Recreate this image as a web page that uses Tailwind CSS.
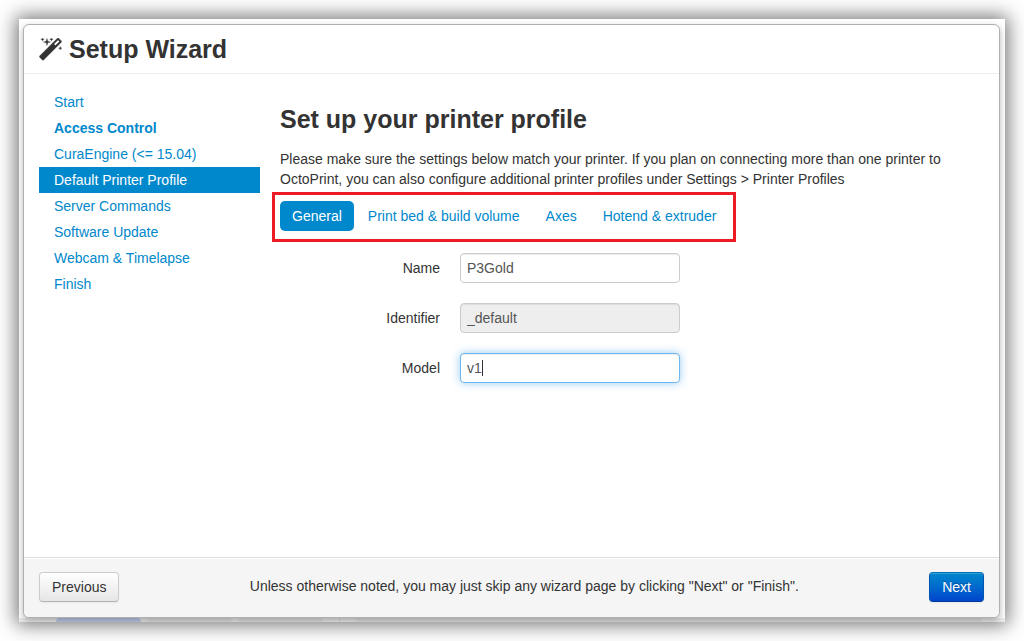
<!DOCTYPE html>
<html lang="en">
<head>
<meta charset="utf-8">
<title>Setup Wizard</title>
<script src="https://cdn.jsdelivr.net/npm/@tailwindcss/browser@4"></script>
</head>
<body class="flex min-h-screen bg-white p-[19px] font-['Liberation_Sans',Arial,sans-serif] text-sm leading-5 text-[#333]">
<div class="relative flex grow overflow-hidden bg-white pt-[5px] pr-[5px] pb-1 pl-1 shadow-[0_0_18px_3px_rgba(0,0,0,0.55)]">
  <!-- Page behind the dialog -->
  <div class="absolute inset-x-0 bottom-0 flex h-1 gap-[6px] bg-[#ececec] pl-[37px]" aria-hidden="true">
    <div class="w-[85px] rounded-t bg-[#bccaea]"></div>
    <div class="w-[85px] rounded-t bg-[#e2e2e2]"></div>
    <div class="w-[85px] rounded-t bg-[#e2e2e2]"></div>
    <div class="ml-[10px] w-px bg-[#dadada]"></div>
    <div class="mr-6 ml-[9px] grow rounded-bl bg-[#e2e2e2]"></div>
  </div>

  <main class="relative flex grow flex-col rounded-md border border-[#b0b0b0] bg-white shadow-[0_3px_7px_rgba(0,0,0,0.3)]">
    <header class="flex items-center gap-[7px] border-b border-[#eee] px-[15px] py-[9px]">
      <svg class="size-[23px]" viewBox="0 32 1664 1664" fill="#333" stroke="#333" stroke-width="24" aria-hidden="true"><path transform="translate(0 1536) scale(1 -1)" d="M1190 955l293 293l-107 107l-293 -293zM1637 1248q0 -27 -18 -45l-1286 -1286q-18 -18 -45 -18t-45 18l-198 198q-18 18 -18 45t18 45l1286 1286q18 18 45 18t45 -18l198 -198q18 -18 18 -45zM286 1438l98 -30l-98 -30l-30 -98l-30 98l-98 30l98 30l30 98zM636 1276l196 -60l-196 -60l-60 -196l-60 196l-196 60l196 60l60 196zM1566 798l98 -30l-98 -30l-30 -98l-30 98l-98 30l98 30l30 98zM926 1438l98 -30l-98 -30l-30 -98l-30 98l-98 30l98 30l30 98z"/></svg>
      <h1 class="text-[25px] leading-[30px] font-bold">Setup Wizard</h1>
    </header>

    <div class="flex grow gap-5 p-[15px]">
      <nav class="w-[221px] shrink-0 text-[#08c]" aria-label="Wizard pages">
        <ul>
          <li><a href="#" class="block px-[15px] py-[3px]">Start</a></li>
          <li><a href="#" class="block px-[15px] py-[3px] font-bold">Access Control</a></li>
          <li><a href="#" class="block px-[15px] py-[3px]">CuraEngine (&lt;= 15.04)</a></li>
          <li><a href="#" aria-current="page" class="block bg-[#08c] px-[15px] py-[3px] text-white">Default Printer Profile</a></li>
          <li><a href="#" class="block px-[15px] py-[3px]">Server Commands</a></li>
          <li><a href="#" class="block px-[15px] py-[3px]">Software Update</a></li>
          <li><a href="#" class="block px-[15px] py-[3px]">Webcam &amp; Timelapse</a></li>
          <li><a href="#" class="block px-[15px] py-[3px]">Finish</a></li>
        </ul>
      </nav>

      <section class="min-w-0 grow pt-[10px]">
        <h2 class="text-[25px] leading-10 font-bold">Set up your printer profile</h2>
        <p class="mt-[10px]">Please make sure the settings below match your printer. If you plan on connecting more than one printer to OctoPrint, you can also configure additional printer profiles under Settings &gt; Printer Profiles</p>

        <div class="relative mt-3 w-fit">
          <ul class="flex gap-[2px] text-[#08c]">
            <li><a href="#" aria-current="true" class="block rounded-[5px] bg-[#08c] px-3 py-[5px] text-white">General</a></li>
            <li><a href="#" class="block px-3 py-[5px]">Print bed &amp; build volume</a></li>
            <li><a href="#" class="block px-3 py-[5px]">Axes</a></li>
            <li><a href="#" class="block px-3 py-[5px]">Hotend &amp; extruder</a></li>
          </ul>
          <!-- Red callout around the tabs -->
          <div class="pointer-events-none absolute -top-[9px] -right-2 -bottom-[11px] -left-2 border-3 border-[#ed1c24]"></div>
        </div>

        <form class="mt-[22px] grid gap-5">
          <div class="flex gap-5">
            <label for="name" class="w-40 py-[5px] text-right">Name</label>
            <input id="name" type="text" value="P3Gold" class="h-[30px] w-[220px] rounded border border-[#ccc] bg-white px-[6px] text-[#555] shadow-[inset_0_1px_1px_rgba(0,0,0,0.075)]">
          </div>
          <div class="flex gap-5">
            <label for="identifier" class="w-40 py-[5px] text-right">Identifier</label>
            <input id="identifier" type="text" value="_default" disabled class="h-[30px] w-[220px] rounded border border-[#ccc] bg-[#eee] px-[6px] text-[#555] shadow-[inset_0_1px_1px_rgba(0,0,0,0.075)]">
          </div>
          <div class="flex gap-5">
            <label for="model" class="w-40 py-[5px] text-right">Model</label>
            <div class="relative">
              <input id="model" type="text" value="v1" class="block h-[30px] w-[220px] rounded border border-[#6fb8ef] bg-white px-[6px] text-[#555] caret-transparent shadow-[inset_0_1px_1px_rgba(0,0,0,0.075),0_0_8px_rgba(82,168,236,0.6)] outline-none">
              <span class="absolute top-[7px] left-[22px] h-4 w-px bg-[#333]" aria-hidden="true"></span>
            </div>
          </div>
        </form>
      </section>
    </div>

    <footer class="flex items-center justify-between rounded-b-md border-t border-[#ddd] bg-[#f5f5f5] px-[15px] pt-[14px] pb-[15px] shadow-[inset_0_1px_0_#fff]">
      <button type="button" class="h-[30px] rounded border border-[#ccc] border-b-[#b3b3b3] bg-linear-to-b from-white to-[#e6e6e6] px-3 shadow-[0_1px_2px_rgba(0,0,0,0.05)]">Previous</button>
      <p class="pb-[2px]">Unless otherwise noted, you may just skip any wizard page by clicking "Next" or "Finish".</p>
      <button type="button" class="h-[30px] rounded border border-[#0055b3] border-t-[#0070b8] border-b-[#003c9c] bg-linear-to-b from-[#08c] to-[#04c] px-3 text-white shadow-[inset_0_1px_0_rgba(255,255,255,0.2),0_1px_2px_rgba(0,0,0,0.05)] text-shadow-[0_-1px_0_rgba(0,0,0,0.25)]">Next</button>
    </footer>
  </main>
</div>
</body>
</html>
